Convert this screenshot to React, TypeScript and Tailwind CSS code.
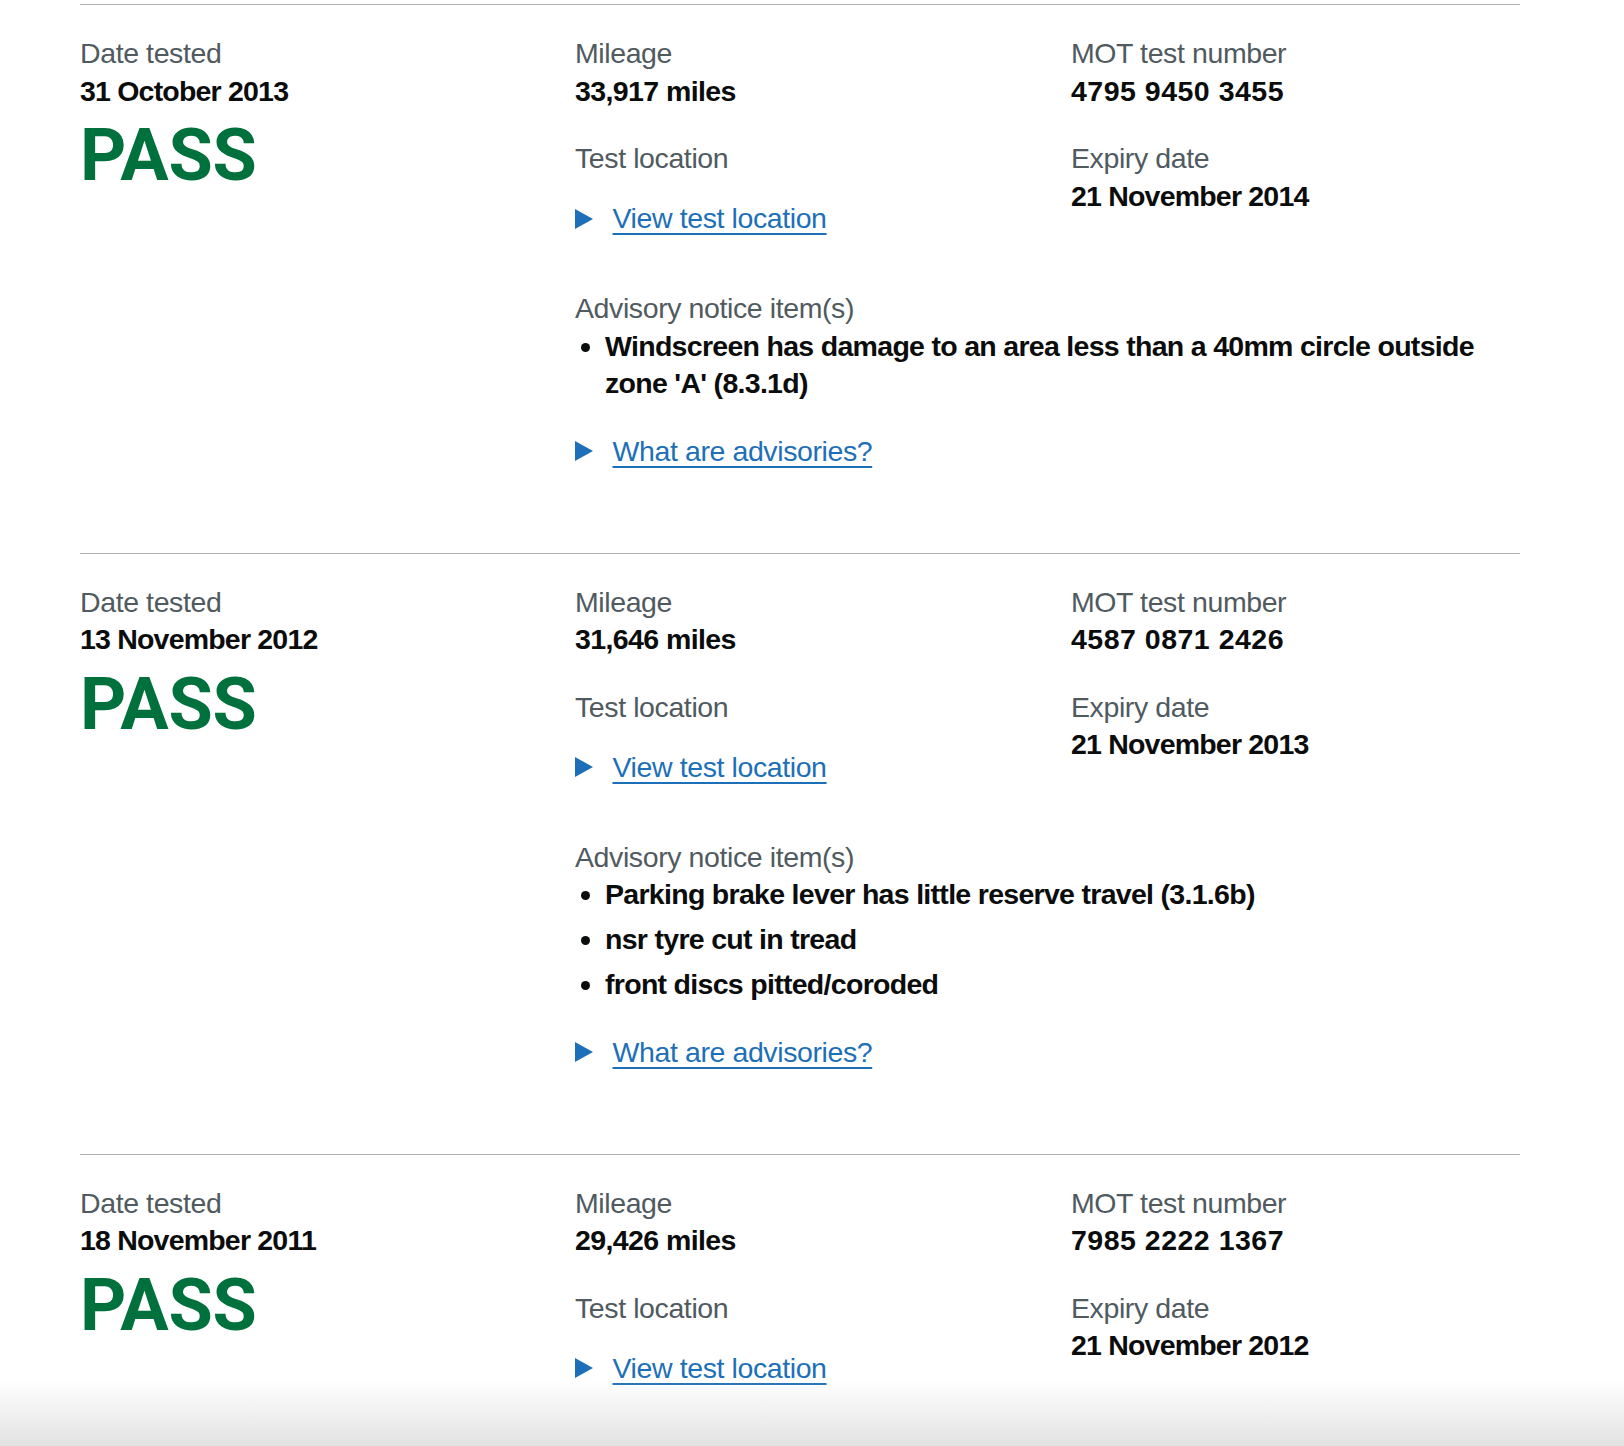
type MotTest = {
  date: string;
  mileage: string;
  testNumber: string;
  expiry: string;
  advisories: string[];
};

const tests: MotTest[] = [
  {
    date: "31 October 2013",
    mileage: "33,917 miles",
    testNumber: "4795 9450 3455",
    expiry: "21 November 2014",
    advisories: [
      "Windscreen has damage to an area less than a 40mm circle outside zone 'A' (8.3.1d)",
    ],
  },
  {
    date: "13 November 2012",
    mileage: "31,646 miles",
    testNumber: "4587 0871 2426",
    expiry: "21 November 2013",
    advisories: [
      "Parking brake lever has little reserve travel (3.1.6b)",
      "nsr tyre cut in tread",
      "front discs pitted/coroded",
    ],
  },
  {
    date: "18 November 2011",
    mileage: "29,426 miles",
    testNumber: "7985 2222 1367",
    expiry: "21 November 2012",
    advisories: [],
  },
];

const Label = ({ children }: { children: React.ReactNode }) => (
  <dt className="text-[28.5px] leading-[37.5px] tracking-[-0.4px] text-[#505a5f]">{children}</dt>
);

const Value = ({ children, className = "" }: { children: React.ReactNode; className?: string }) => (
  <dd className={`text-[28.5px] leading-[37.5px] font-bold text-[#0b0c0c] ${className}`}>{children}</dd>
);

const Summary = ({ text, className = "" }: { text: string; className?: string }) => (
  <div className={`flex items-center ${className}`}>
    <svg width="18" height="20" viewBox="0 0 18 20" className="shrink-0">
      <polygon points="0,0 18,10 0,20" fill="#1d70b8" />
    </svg>
    <a
      href="#"
      className="ml-[19.5px] text-[28.5px] leading-[37.5px] tracking-[-0.4px] text-[#1d70b8] underline decoration-[1.5px] underline-offset-[4.5px]"
    >
      {text}
    </a>
  </div>
);

const TestRow = ({ test }: { test: MotTest }) => (
  <section className="grid grid-cols-[495px_1fr] border-t border-[#b1b4b6] pt-[30px] pb-[30px]">
    <dl>
      <Label>Date tested</Label>
      <Value className="tracking-[-0.8px]">{test.date}</Value>
      <p className="mt-[8px] font-['Roboto',sans-serif] text-[72px] leading-[75px] font-bold tracking-[-0.3px] text-[#00703c]">
        PASS
      </p>
    </dl>
    <div>
      <div className="grid grid-cols-[496px_1fr]">
        <dl>
          <Label>Mileage</Label>
          <Value className="mb-[30px] tracking-[-0.6px]">{test.mileage}</Value>
          <Label>Test location</Label>
          <dd>
            <Summary text="View test location" className="mt-[22.5px] mb-[52.5px]" />
          </dd>
        </dl>
        <dl>
          <Label>MOT test number</Label>
          <Value className="mb-[30px] tracking-[0.5px]">{test.testNumber}</Value>
          <Label>Expiry date</Label>
          <Value className="tracking-[-0.8px]">{test.expiry}</Value>
        </dl>
      </div>
      {test.advisories.length > 0 && (
        <dl>
          <Label>Advisory notice item(s)</Label>
          <dd>
            <ul className="list-disc pl-[30px]">
              {test.advisories.map((item) => (
                <li
                  key={item}
                  className="mb-[7.5px] text-[28.5px] leading-[37.5px] font-bold tracking-[-0.7px] text-[#0b0c0c]"
                >
                  {item}
                </li>
              ))}
            </ul>
            <Summary text="What are advisories?" className="mt-[30px] mb-[52.5px]" />
          </dd>
        </dl>
      )}
    </div>
  </section>
);

export default function App() {
  return (
    <div className="relative h-[1446px] overflow-hidden bg-white font-['Liberation_Sans',Arial,sans-serif]">
      <div className="ml-[80px] w-[1440px] pt-[4px]">
        {tests.map((t) => (
          <TestRow key={t.testNumber} test={t} />
        ))}
      </div>
      <div className="pointer-events-none absolute inset-x-0 bottom-0 h-[66px] bg-linear-to-b from-white/0 to-[#e2e2e2]" />
    </div>
  );
}
